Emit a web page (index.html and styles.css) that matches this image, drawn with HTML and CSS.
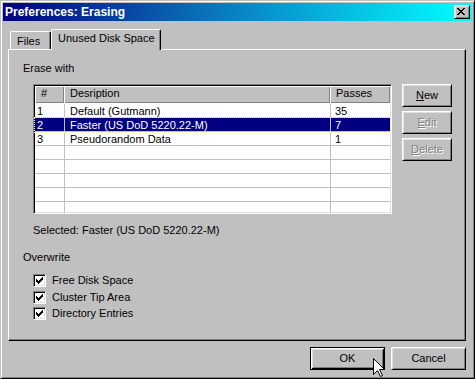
FILE: index.html
```html
<!DOCTYPE html>
<html>
<head>
<meta charset="utf-8">
<title>Preferences: Erasing</title>
<link rel="stylesheet" href="styles.css">
</head>
<body>
<div class="window">
  <div class="titlebar">
    <span class="title">Preferences: Erasing</span>
    <span class="close-btn">
      <svg width="8" height="7" viewBox="0 0 8 7" shape-rendering="crispEdges">
        <rect x="0" y="0" width="2" height="1"/><rect x="6" y="0" width="2" height="1"/>
        <rect x="1" y="1" width="2" height="1"/><rect x="5" y="1" width="2" height="1"/>
        <rect x="2" y="2" width="4" height="1"/>
        <rect x="3" y="3" width="2" height="1"/>
        <rect x="2" y="4" width="4" height="1"/>
        <rect x="1" y="5" width="2" height="1"/><rect x="5" y="5" width="2" height="1"/>
        <rect x="0" y="6" width="2" height="1"/><rect x="6" y="6" width="2" height="1"/>
      </svg>
    </span>
  </div>
  <div class="client">
    <div class="tabs">
      <div class="tab tab-files">Files</div>
      <div class="tab tab-active">Unused Disk Space</div>
    </div>
    <div class="pane">
      <div class="group-label erase-label">Erase with</div>
      <div class="erase-row">
        <div class="listview">
          <div class="lv-header">
            <div class="hcell h1">#</div>
            <div class="hcell h2">Desription</div>
            <div class="hcell h3">Passes</div>
          </div>
          <div class="lv-body">
            <div class="lv-row"><div class="cell c1">1</div><div class="cell c2">Default (Gutmann)</div><div class="cell c3">35</div></div>
            <div class="lv-row selected"><div class="cell c1">2</div><div class="cell c2">Faster (US DoD 5220.22-M)</div><div class="cell c3">7</div></div>
            <div class="lv-row"><div class="cell c1">3</div><div class="cell c2">Pseudorandom Data</div><div class="cell c3">1</div></div>
            <div class="lv-row"><div class="cell c1"></div><div class="cell c2"></div><div class="cell c3"></div></div>
            <div class="lv-row"><div class="cell c1"></div><div class="cell c2"></div><div class="cell c3"></div></div>
            <div class="lv-row"><div class="cell c1"></div><div class="cell c2"></div><div class="cell c3"></div></div>
            <div class="lv-row"><div class="cell c1"></div><div class="cell c2"></div><div class="cell c3"></div></div>
            <div class="lv-row"><div class="cell c1"></div><div class="cell c2"></div><div class="cell c3"></div></div>
          </div>
        </div>
        <div class="side-buttons">
          <button class="btn"><span><u>N</u>ew</span></button>
          <button class="btn disabled"><span><u>E</u>dit</span></button>
          <button class="btn disabled"><span><u>D</u>elete</span></button>
        </div>
      </div>
      <div class="selected-text">Selected: Faster (US DoD 5220.22-M)</div>
      <div class="group-label overwrite-label">Overwrite</div>
      <div class="checks">
        <div class="check-row"><span class="checkbox"><svg width="7" height="7" viewBox="0 0 7 7" shape-rendering="crispEdges"><rect x="6" y="0" width="1" height="1"/><rect x="5" y="1" width="2" height="1"/><rect x="0" y="2" width="1" height="1"/><rect x="4" y="2" width="3" height="1"/><rect x="0" y="3" width="2" height="1"/><rect x="3" y="3" width="3" height="1"/><rect x="0" y="4" width="5" height="1"/><rect x="1" y="5" width="3" height="1"/><rect x="2" y="6" width="1" height="1"/></svg></span><span class="check-label">Free Disk Space</span></div>
        <div class="check-row"><span class="checkbox"><svg width="7" height="7" viewBox="0 0 7 7" shape-rendering="crispEdges"><rect x="6" y="0" width="1" height="1"/><rect x="5" y="1" width="2" height="1"/><rect x="0" y="2" width="1" height="1"/><rect x="4" y="2" width="3" height="1"/><rect x="0" y="3" width="2" height="1"/><rect x="3" y="3" width="3" height="1"/><rect x="0" y="4" width="5" height="1"/><rect x="1" y="5" width="3" height="1"/><rect x="2" y="6" width="1" height="1"/></svg></span><span class="check-label">Cluster Tip Area</span></div>
        <div class="check-row"><span class="checkbox"><svg width="7" height="7" viewBox="0 0 7 7" shape-rendering="crispEdges"><rect x="6" y="0" width="1" height="1"/><rect x="5" y="1" width="2" height="1"/><rect x="0" y="2" width="1" height="1"/><rect x="4" y="2" width="3" height="1"/><rect x="0" y="3" width="2" height="1"/><rect x="3" y="3" width="3" height="1"/><rect x="0" y="4" width="5" height="1"/><rect x="1" y="5" width="3" height="1"/><rect x="2" y="6" width="1" height="1"/></svg></span><span class="check-label">Directory Entries</span></div>
      </div>
    </div>
    <div class="footer">
      <button class="btn btn-wide btn-default"><span>OK</span></button>
      <button class="btn btn-wide"><span>Cancel</span></button>
    </div>
  </div>
  <svg class="cursor" width="12" height="19" viewBox="0 0 12 19">
    <path d="M0.5 0.5 L0.5 16.5 L4.5 12.5 L7.5 18.5 L9.5 17.5 L6.5 11.5 L11.5 11.5 Z" fill="#fff" stroke="#000" stroke-width="1" stroke-linejoin="miter"/>
  </svg>
</div>
</body>
</html>
```
FILE: styles.css
```css
html, body {
  margin: 0;
  padding: 0;
  background: #c0c0c0;
}

body {
  font-family: "Liberation Sans", Arial, sans-serif;
  font-size: 11px;
  color: #000;
}

.window {
  position: relative;
  box-sizing: border-box;
  width: 475px;
  height: 379px;
  border: 1px solid;
  border-color: #c0c0c0 #000 #000 #c0c0c0;
  box-shadow: inset 1px 1px #fff, inset -1px -1px #808080;
  padding: 2px;
  background: #c0c0c0;
  display: flex;
  flex-direction: column;
  overflow: hidden;
}

.titlebar {
  height: 18px;
  flex: none;
  display: flex;
  align-items: center;
  justify-content: space-between;
  padding: 0 2px;
  background: linear-gradient(90deg, #000080 0%, #0a5cae 35%, #0890cc 55%, #00ffff 100%);
}

.title {
  color: #fff;
  font-weight: bold;
  font-size: 12px;
  line-height: 18px;
  white-space: nowrap;
}

.close-btn {
  box-sizing: border-box;
  width: 16px;
  height: 14px;
  padding: 2px 0 0 2px;
  background: #c0c0c0;
  border: 1px solid;
  border-color: #fff #000 #000 #fff;
  box-shadow: inset 1px 1px #dfdfdf, inset -1px -1px #808080;
}

.close-btn svg {
  display: block;
  fill: #000;
}

.client {
  flex: 1;
  display: flex;
  flex-direction: column;
  padding: 0 6px 0 5px;
}

.tabs {
  display: flex;
  align-items: flex-end;
  height: 20px;
  margin-top: 8px;
}

.tab {
  box-sizing: border-box;
  background: #c0c0c0;
  border-top: 1px solid #fff;
  border-left: 1px solid #fff;
  border-right: 1px solid #000;
  box-shadow: inset -1px 0 #808080;
  border-radius: 2px 2px 0 0;
  line-height: 13px;
  white-space: nowrap;
}

.tab-files {
  margin-left: 2px;
  width: 41px;
  height: 18px;
  padding: 3px 0 0 6px;
}

.tab-active {
  position: relative;
  z-index: 1;
  width: 110px;
  height: 21px;
  margin-bottom: -1px;
  padding: 2px 0 0 6px;
}

.pane {
  box-sizing: border-box;
  height: 292px;
  border: 1px solid;
  border-color: #fff #000 #000 #fff;
  box-shadow: inset -1px -1px #808080;
  display: flex;
  flex-direction: column;
}

.group-label {
  line-height: 13px;
  margin-left: 14px;
}

.erase-label {
  margin-top: 12px;
}

.erase-row {
  display: flex;
  align-items: flex-start;
  margin-top: 9px;
  margin-left: 24px;
}

.listview {
  box-sizing: border-box;
  width: 359px;
  height: 130px;
  background: #fff;
  border: 1px solid;
  border-color: #808080 #fff #fff #808080;
  box-shadow: inset 1px 1px #000, inset -1px -1px #dfdfdf;
  padding: 1px;
  overflow: hidden;
}

.lv-header {
  display: flex;
  height: 17px;
}

.hcell {
  box-sizing: border-box;
  height: 17px;
  background: #c0c0c0;
  box-shadow: inset 1px 1px #fff, inset -1px -1px #808080;
  padding: 1px 0 0 6px;
  line-height: 13px;
  white-space: nowrap;
}

.h1 { width: 29px; }
.h2 { width: 266px; }
.h3 { flex: 1; }

.lv-body {
  padding-top: 1px;
}

.lv-row {
  display: flex;
  box-sizing: border-box;
  height: 14px;
  border-bottom: 1px solid #c0c0c0;
}

.cell {
  box-sizing: border-box;
  height: 13px;
  padding-top: 1px;
  line-height: 12px;
  white-space: nowrap;
}

.c1 {
  width: 30px;
  padding-left: 2px;
  border-right: 1px solid #c0c0c0;
}

.c2 {
  width: 266px;
  padding-left: 5px;
  border-right: 1px solid #c0c0c0;
}

.c3 {
  flex: 1;
  padding-left: 4px;
}

.lv-row.selected {
  background: #000080;
  color: #fff;
  outline: 1px dotted #ffff80;
  outline-offset: 0;
}

.side-buttons {
  display: flex;
  flex-direction: column;
  gap: 4px;
  margin-left: 10px;
}

.btn {
  box-sizing: border-box;
  width: 50px;
  height: 23px;
  padding: 0;
  margin: 0;
  background: #c0c0c0;
  border: 1px solid;
  border-color: #fff #000 #000 #fff;
  box-shadow: inset 1px 1px #dfdfdf, inset -1px -1px #808080;
  font-family: "Liberation Sans", Arial, sans-serif;
  font-size: 11px;
  line-height: 13px;
  color: #000;
  display: flex;
  align-items: center;
  justify-content: center;
}

.btn.disabled {
  color: #808080;
  text-shadow: 1px 1px 0 #fff;
}

.btn-wide {
  width: 75px;
}

.btn-default {
  border-color: #000;
  box-shadow: inset 1px 1px #fff, inset -1px -1px #000, inset 2px 2px #dfdfdf, inset -2px -2px #808080;
}

.selected-text {
  line-height: 13px;
  margin-top: 10px;
  margin-left: 24px;
}

.overwrite-label {
  margin-top: 14px;
}

.checks {
  display: flex;
  flex-direction: column;
  gap: 3.5px;
  margin-top: 10px;
  margin-left: 24px;
}

.check-row {
  display: flex;
  align-items: center;
  height: 13px;
}

.checkbox {
  box-sizing: border-box;
  width: 13px;
  height: 13px;
  flex: none;
  background: #fff;
  border: 1px solid;
  border-color: #808080 #fff #fff #808080;
  box-shadow: inset 1px 1px #000, inset -1px -1px #dfdfdf;
  padding: 2px 0 0 2px;
}

.checkbox svg {
  display: block;
  fill: #000;
}

.check-label {
  margin-left: 6px;
  line-height: 13px;
}

.footer {
  display: flex;
  justify-content: flex-end;
  gap: 6px;
  margin-top: 6px;
}

.cursor {
  position: absolute;
  left: 372px;
  top: 357px;
  z-index: 5;
}
```
